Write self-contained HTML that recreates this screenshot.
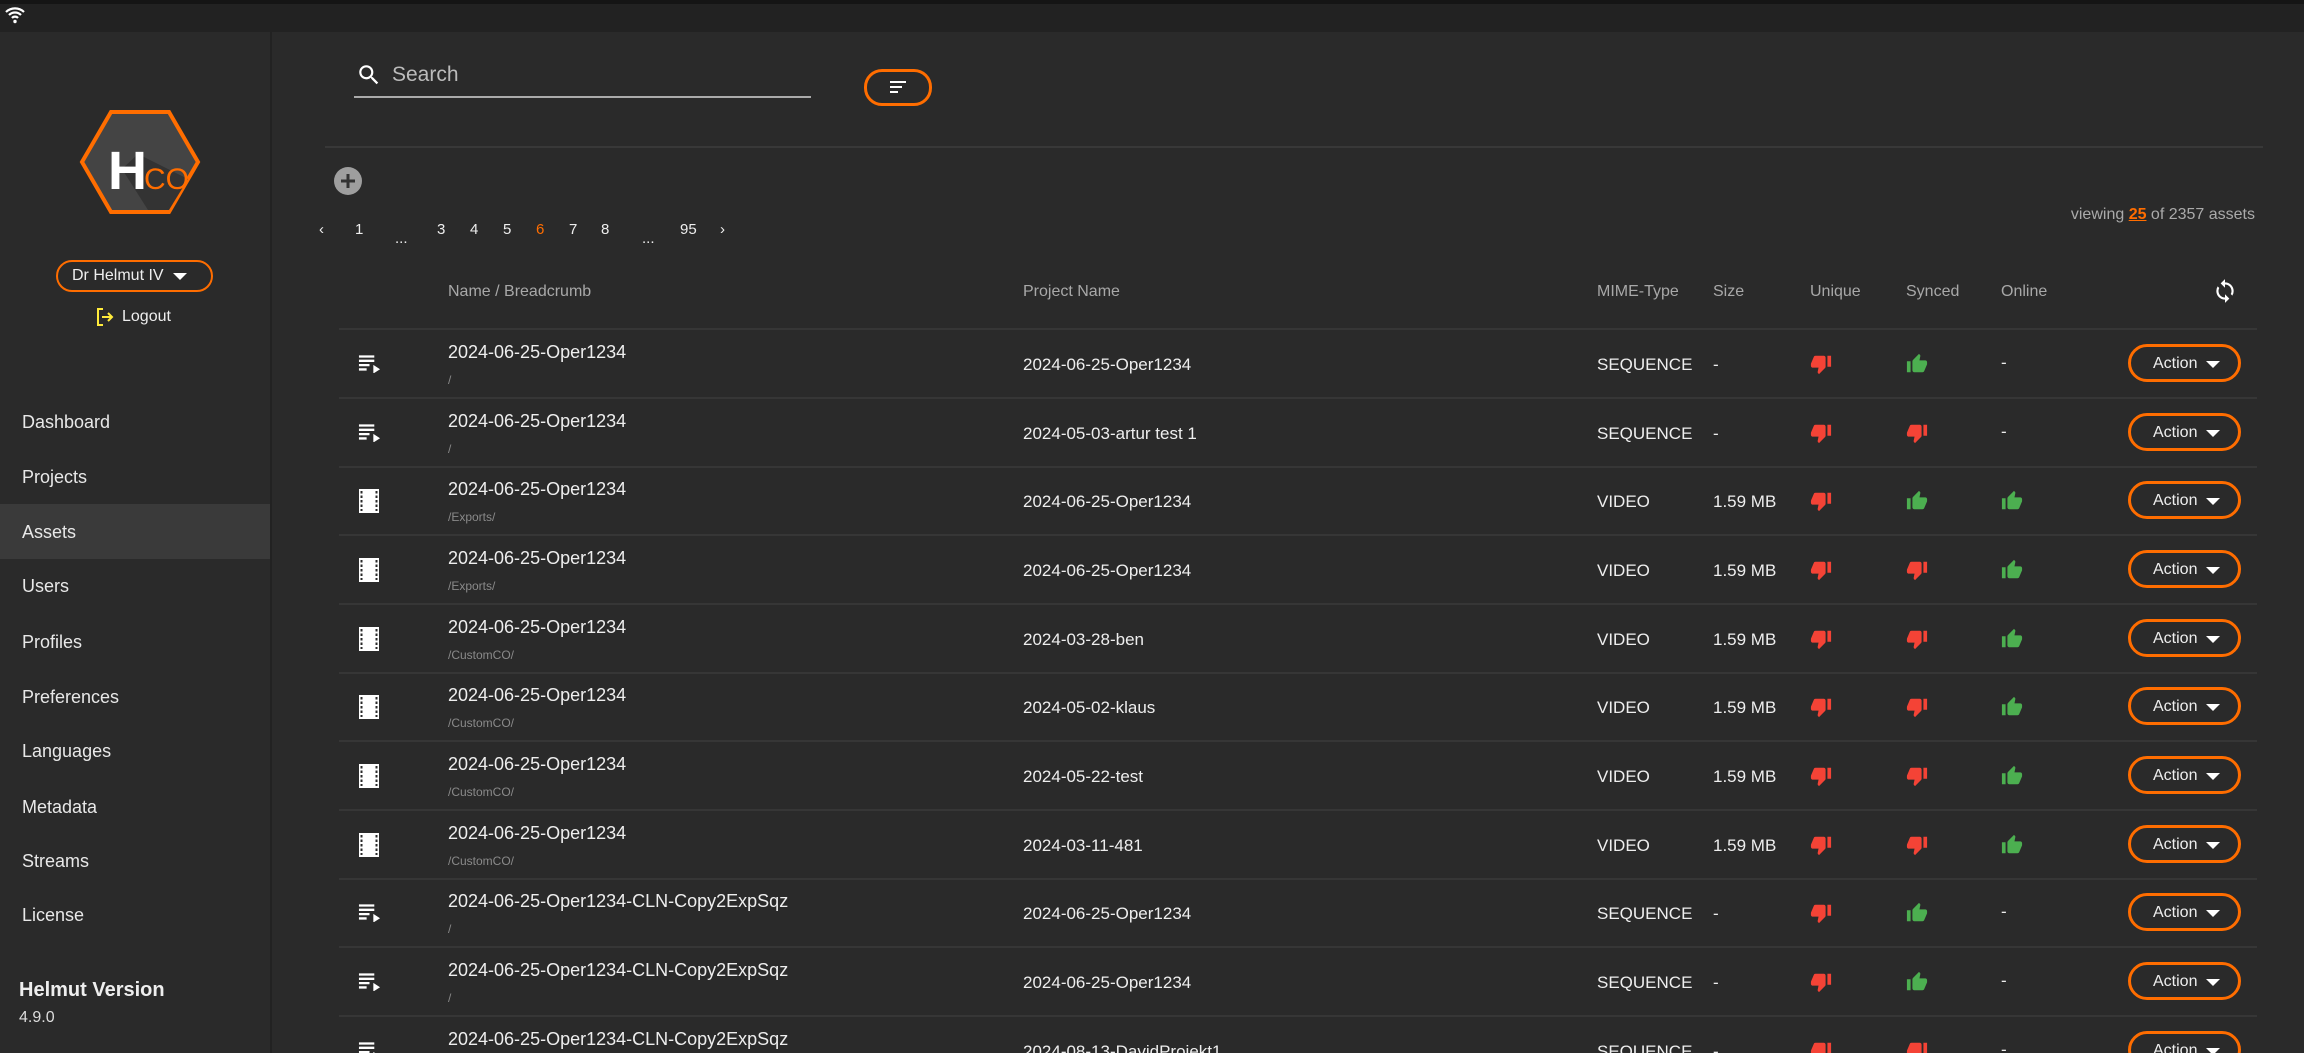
<!DOCTYPE html>
<html><head><meta charset="utf-8"><style>
*{margin:0;padding:0;box-sizing:border-box}
html{width:2304px;height:1053px;overflow:hidden}
body{width:2304px;height:1053px;background:#2a2a2a;font-family:"Liberation Sans",sans-serif;color:#eee;position:relative;overflow:hidden}
.a{position:absolute;white-space:nowrap}
.nav{left:22px;font-size:18px;color:#e8e8e8}
.hd{top:283px;font-size:16px;color:#a8a8a8}
.ln{position:absolute;left:339px;width:1918px;height:2px;background:#363636}
.nm{font-size:18px;color:#eee}
.bc{font-size:12px;color:#8a8a8a}
.c{font-size:17px;color:#eee}
.btn{position:absolute;left:2128px;width:113px;height:38px;border:3px solid #ff6d00;border-radius:19px;font-size:16px;color:#eee;padding:8px 0 0 22px}
.btn:after{content:"";position:absolute;left:75px;top:14px;border-left:7px solid transparent;border-right:7px solid transparent;border-top:7px solid #fff}
.pg{top:221px;font-size:15px;color:#eee}
</style></head><body>
<div class="a" style="left:0;top:0;width:2304px;height:4px;background:#151515"></div>
<div class="a" style="left:0;top:4px;width:2304px;height:28px;background:#222"></div>
<svg class="a" style="left:4px;top:6px" width="22" height="18" viewBox="0 0 22 18"><path d="M2 6a13 13 0 0 1 18 0M5 9a8.5 8.5 0 0 1 12 0M8 12a4 4 0 0 1 6 0" stroke="#fff" stroke-width="2.2" fill="none"/><circle cx="11" cy="15.5" r="1.7" fill="#fff"/></svg>
<div class="a" style="left:270px;top:32px;width:2px;height:1021px;background:#222"></div>
<svg class="a" style="left:78px;top:109px" width="124" height="106" viewBox="0 0 124 106"><polygon points="33,3 91,3 120,53 91,103 33,103 4,53" fill="#444" stroke="#ff6d00" stroke-width="4"/><polygon points="44,60 60,45 110,70 91,101 70,101" fill="#333"/><text x="30" y="80" font-family="Liberation Sans" font-weight="bold" font-size="54" fill="#fff">H</text><text x="66" y="80" font-family="Liberation Sans" font-size="30" fill="#ff6d00">CO</text></svg>
<div class="a" style="left:56px;top:260px;width:157px;height:32px;border:2px solid #ff6d00;border-radius:16px;font-size:16px;padding:5px 0 0 14px">Dr Helmut IV</div>
<div class="a" style="left:173px;top:273px;border-left:7px solid transparent;border-right:7px solid transparent;border-top:7px solid #fff"></div>
<svg class="a" style="left:96px;top:307px" width="18" height="20" viewBox="0 0 18 20"><path d="M7 2H2v16h5" stroke="#ffeb3b" stroke-width="2" fill="none"/><path d="M6 10h9M12 6l4 4-4 4" stroke="#ffeb3b" stroke-width="2" fill="none"/></svg>
<div class="a" style="left:122px;top:308px;font-size:16px">Logout</div>
<div class="a" style="left:0;top:504px;width:270px;height:55px;background:#3a3a3a"></div>
<div class="a nav" style="top:412px">Dashboard</div>
<div class="a nav" style="top:467px">Projects</div>
<div class="a nav" style="top:522px">Assets</div>
<div class="a nav" style="top:576px">Users</div>
<div class="a nav" style="top:632px">Profiles</div>
<div class="a nav" style="top:687px">Preferences</div>
<div class="a nav" style="top:741px">Languages</div>
<div class="a nav" style="top:797px">Metadata</div>
<div class="a nav" style="top:851px">Streams</div>
<div class="a nav" style="top:905px">License</div>
<div class="a" style="left:19px;top:979px;font-size:20px;font-weight:bold">Helmut Version</div>
<div class="a" style="left:19px;top:1009px;font-size:16px;color:#ddd">4.9.0</div>
<svg class="a" style="left:356px;top:62px" width="26" height="26" viewBox="0 0 24 24"><path fill="#fff" d="M15.5 14h-.79l-.28-.27A6.47 6.47 0 0 0 16 9.5 6.5 6.5 0 1 0 9.5 16c1.61 0 3.09-.59 4.23-1.57l.27.28v.79l5 4.99L20.49 19l-4.99-5zm-6 0C7.01 14 5 11.99 5 9.5S7.01 5 9.5 5 14 7.01 14 9.5 11.99 14 9.5 14z"/></svg>
<div class="a" style="left:392px;top:63px;font-size:21px;color:#bbb">Search</div>
<div class="a" style="left:354px;top:96px;width:457px;height:2px;background:#aaa"></div>
<div class="a" style="left:864px;top:69px;width:68px;height:37px;border:3px solid #ff6d00;border-radius:18px"></div>
<svg class="a" style="left:888px;top:78px" width="20" height="18" viewBox="0 0 20 18"><path d="M2 4h16M2 9h12M2 14h8" stroke="#fff" stroke-width="2"/></svg>
<div class="a" style="left:325px;top:146px;width:1938px;height:2px;background:#383838"></div>
<svg class="a" style="left:334px;top:167px" width="28" height="28" viewBox="0 0 28 28"><circle cx="14" cy="14" r="14" fill="#9e9e9e"/><path d="M14 7v14M7 14h14" stroke="#333" stroke-width="3"/></svg>
<div class="a pg" style="left:319px">‹</div>
<div class="a pg" style="left:355px">1</div>
<div class="a pg" style="left:395px;top:230px">...</div>
<div class="a pg" style="left:437px">3</div>
<div class="a pg" style="left:470px">4</div>
<div class="a pg" style="left:503px">5</div>
<div class="a pg" style="left:536px;color:#ff6d00">6</div>
<div class="a pg" style="left:569px">7</div>
<div class="a pg" style="left:601px">8</div>
<div class="a pg" style="left:642px;top:230px">...</div>
<div class="a pg" style="left:680px">95</div>
<div class="a pg" style="left:720px">›</div>
<div class="a" style="right:49px;top:206px;font-size:16px;color:#aaa">viewing <u style="color:#ff6d00;font-weight:bold">25</u> of 2357 assets</div>
<div class="a hd" style="left:448px">Name / Breadcrumb</div>
<div class="a hd" style="left:1023px">Project Name</div>
<div class="a hd" style="left:1597px">MIME-Type</div>
<div class="a hd" style="left:1713px">Size</div>
<div class="a hd" style="left:1810px">Unique</div>
<div class="a hd" style="left:1906px">Synced</div>
<div class="a hd" style="left:2001px">Online</div>
<svg class="a" style="left:2212px;top:277px" width="26" height="28" viewBox="0 0 24 24"><path fill="#fff" d="M12 4V1L8 5l4 4V6c3.31 0 6 2.69 6 6 0 1.010-.25 1.97-.7 2.8l1.46 1.46A7.93 7.93 0 0 0 20 12c0-4.42-3.58-8-8-8zm0 14c-3.31 0-6-2.69-6-6 0-1.01.25-1.970.7-2.8L5.24 7.74A7.930 7.930 0 0 0 4 12c0 4.42 3.58 8 8 8v3l4-4-4-4v3z"/></svg>
<div class="ln" style="top:328px"></div>
<svg width="0" height="0" style="position:absolute"><defs>
<symbol id="up" viewBox="0 0 24 24"><path fill="#4caf50" d="M1 21h4V9H1v12zm22-11c0-1.1-.9-2-2-2h-6.31l.95-4.57.03-.32c0-.41-.17-.79-.44-1.06L14.17 1 7.59 7.59C7.22 7.95 7 8.45 7 9v10c0 1.1.9 2 2 2h9c.83 0 1.54-.5 1.84-1.22l3.02-7.05c.09-.23.14-.47.14-.73v-2z"/></symbol>
<symbol id="dn" viewBox="0 0 24 24"><path fill="#f44336" d="M15 3H6c-.83 0-1.54.5-1.84 1.22l-3.02 7.05c-.09.23-.14.47-.14.73v2c0 1.1.9 2 2 2h6.31l-.95 4.57-.03.32c0 .41.17.79.44 1.06L9.83 23l6.59-6.59c.36-.36.58-.86.58-1.41V5c0-1.1-.9-2-2-2zm4 0v12h4V3h-4z"/></symbol>
<symbol id="seq" viewBox="0 0 24 20"><path fill="#fff" d="M1 2h16v2.4H1zM1 6.5h16v2.4H1zM1 11h11v2.4H1zM1 15.5h8v2.4H1zM16 12l7 4.5-7 4.5z"/></symbol>
<symbol id="vid" viewBox="0 0 20 24"><path fill="#fff" fill-rule="evenodd" d="M0 0h20v24H0zM1.5 2h2v2.5h-2zM1.5 6.5h2V9h-2zM1.5 11h2v2.5h-2zM1.5 15.5h2V18h-2zM1.5 20h2v2h-2zM16.5 2h2v2.5h-2zM16.5 6.5h2V9h-2zM16.5 11h2v2.5h-2zM16.5 15.5h2V18h-2zM16.5 20h2v2h-2z"/></symbol>
</defs></svg>
<div id="rows"></div>
<script>
var R=[
["s","/","2024-06-25-Oper1234","SEQUENCE","-","d","u","-"],
["s","/","2024-05-03-artur test 1","SEQUENCE","-","d","d","-"],
["v","/Exports/","2024-06-25-Oper1234","VIDEO","1.59 MB","d","u","u"],
["v","/Exports/","2024-06-25-Oper1234","VIDEO","1.59 MB","d","d","u"],
["v","/CustomCO/","2024-03-28-ben","VIDEO","1.59 MB","d","d","u"],
["v","/CustomCO/","2024-05-02-klaus","VIDEO","1.59 MB","d","d","u"],
["v","/CustomCO/","2024-05-22-test","VIDEO","1.59 MB","d","d","u"],
["v","/CustomCO/","2024-03-11-481","VIDEO","1.59 MB","d","d","u"],
["s","/","2024-06-25-Oper1234","SEQUENCE","-","d","u","-"],
["s","/","2024-06-25-Oper1234","SEQUENCE","-","d","u","-"],
["s","/","2024-08-13-DavidProjekt1","SEQUENCE","-","d","d","-"]];
var names=["2024-06-25-Oper1234","2024-06-25-Oper1234","2024-06-25-Oper1234","2024-06-25-Oper1234","2024-06-25-Oper1234","2024-06-25-Oper1234","2024-06-25-Oper1234","2024-06-25-Oper1234","2024-06-25-Oper1234-CLN-Copy2ExpSqz","2024-06-25-Oper1234-CLN-Copy2ExpSqz","2024-06-25-Oper1234-CLN-Copy2ExpSqz"];
var h="";
function ic(k,x,t){if(k=="-")return '<div class="a c" style="left:'+x+'px;top:'+(t+24)+'px">-</div>';return '<svg class="a" style="left:'+x+'px;top:'+(t+24)+'px" width="22" height="22"><use href="#'+(k=="u"?"up":"dn")+'"/></svg>';}
R.forEach(function(r,i){var t=Math.round(329+i*68.65);
if(r[0]=="s")h+='<svg class="a" style="left:358px;top:'+(t+24)+'px" width="23" height="20"><use href="#seq"/></svg>';
else h+='<svg class="a" style="left:359px;top:'+(t+22)+'px" width="20" height="26"><use href="#vid"/></svg>';
h+='<div class="a nm" style="left:448px;top:'+(t+13)+'px">'+names[i]+'</div>';
h+='<div class="a bc" style="left:448px;top:'+(t+44)+'px">'+r[1]+'</div>';
h+='<div class="a c" style="left:1023px;top:'+(t+26)+'px">'+r[2]+'</div>';
h+='<div class="a c" style="left:1597px;top:'+(t+26)+'px">'+r[3]+'</div>';
h+='<div class="a c" style="left:1713px;top:'+(t+26)+'px">'+r[4]+'</div>';
h+=ic(r[5],1810,t)+ic(r[6],1906,t)+ic(r[7],2001,t);
h+='<div class="btn" style="top:'+(t+15)+'px">Action</div>';
h+='<div class="ln" style="top:'+(t+68)+'px"></div>';});
document.getElementById("rows").innerHTML=h;
</script>
</body></html>
